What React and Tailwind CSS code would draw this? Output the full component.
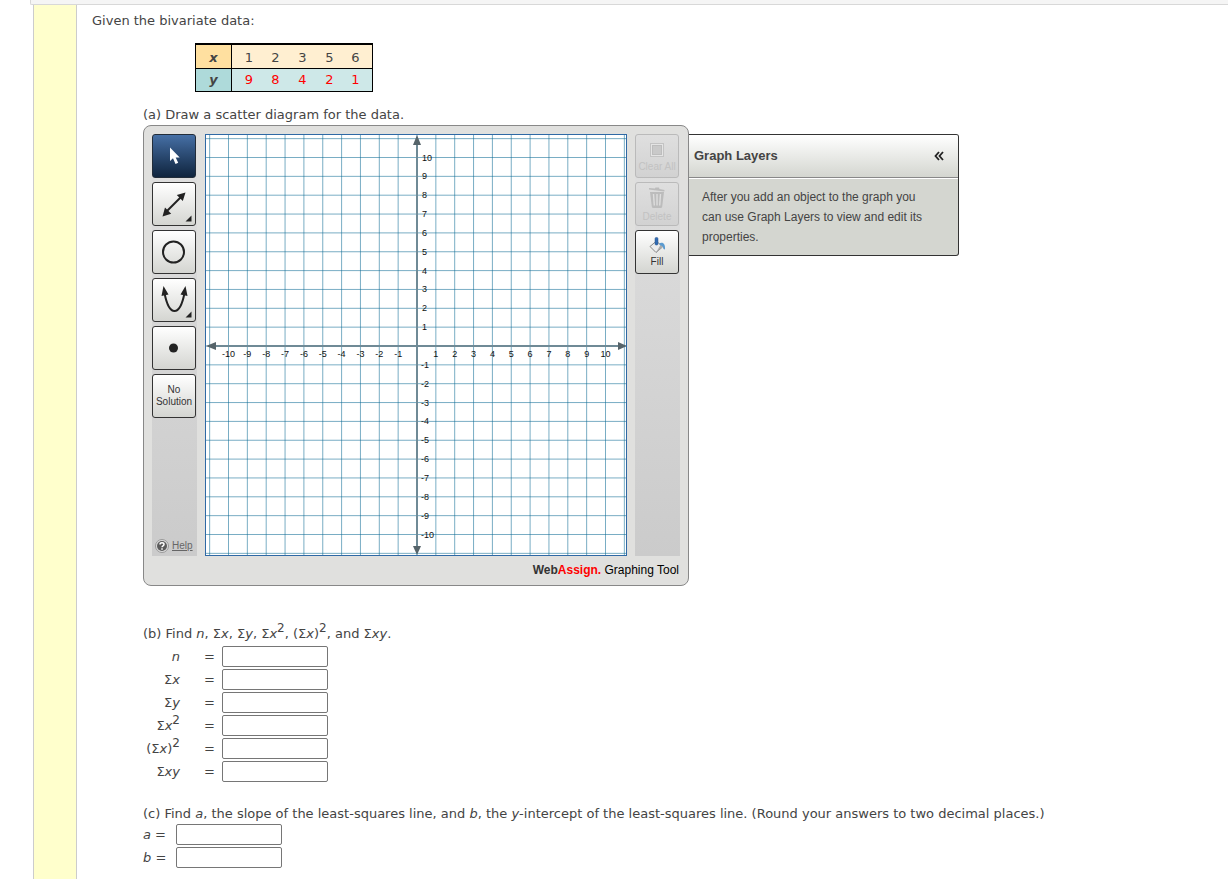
import React from "react";

const STEP = 18.85;
const MID = 212;
const LINES = Array.from({ length: 23 }, (_, i) => i - 11);
const TICKS = LINES.filter((n) => n !== 0 && Math.abs(n) <= 10);

const DATA = { x: [1, 2, 3, 5, 6], y: [9, 8, 4, 2, 1] };

const TOOL =
  "flex h-11 w-11 flex-col items-center justify-center rounded-[3px] border border-[#333] bg-linear-to-b from-white to-[#d4d5d1] text-[#333]";
const DISABLED =
  "flex h-11 w-11 flex-col items-center justify-end rounded-[3px] border border-[#bababa] bg-linear-to-b from-[#dfdfdf] to-[#d2d2d2] text-[#c2c2c2]";
const TOOL_TEXT = "font-['Liberation_Sans',sans-serif] text-[10px] leading-3";

function Sq({ children }) {
  return (
    <>
      {children}
      <sup className="text-[12px]">2</sup>
    </>
  );
}

function DataTable() {
  return (
    <table className="ml-[103px] mt-3 border-separate border-spacing-0 border border-t-2 border-black text-center leading-5">
      <tbody>
        <tr className="h-6 bg-[#ffefd1]">
          <th scope="row" className="w-9 border-r border-b border-black bg-[#ffe0a0] pt-[3px] italic">x</th>
          {DATA.x.map((v) => (
            <td key={v} className="w-[27px] border-b border-black pt-[3px] first-of-type:w-[30px] first-of-type:pl-1 last:w-[29px] last:pr-1">{v}</td>
          ))}
        </tr>
        <tr className="h-[22px] bg-[#cee8e8] text-[#f00]">
          <th scope="row" className="border-r border-black bg-[#aedada] italic text-[#444]">y</th>
          {DATA.y.map((v) => (
            <td key={v} className="first-of-type:pl-1 last:pr-1">{v}</td>
          ))}
        </tr>
      </tbody>
    </table>
  );
}

function Graph() {
  return (
    <svg width="422" height="422" viewBox="0 0 422 422" className="shrink-0 bg-white" role="img" aria-label="Coordinate grid">
      <g stroke="#0b6a93" strokeOpacity="0.55" strokeWidth="1">
        {LINES.map((n) => (
          <g key={n}>
            <line x1={MID + n * STEP} x2={MID + n * STEP} y1="0" y2="422" />
            <line y1={MID + n * STEP} y2={MID + n * STEP} x1="0" x2="422" />
          </g>
        ))}
      </g>
      <g stroke="#6f8a96" strokeWidth="2">
        <line x1="212" x2="212" y1="4" y2="418" />
        <line x1="4" x2="418" y1="212" y2="212" />
      </g>
      <g fill="#56646a">
        <path d="M212 1l4 10h-8z" />
        <path d="M212 421l4-9h-8z" />
        <path d="M1 212l10-4v8z" />
        <path d="M422 212l-9-4v8z" />
      </g>
      <g className="font-['Liberation_Sans',sans-serif] text-[9px]" fill="#111">
        {TICKS.map((n) => (
          <g key={n}>
            <text x={MID + n * STEP} y="223" textAnchor="middle">{n}</text>
            <text x={n < 0 ? 216 : 217} y={MID - n * STEP + 3}>{n}</text>
          </g>
        ))}
      </g>
      <rect x="0.5" y="0.5" width="421" height="421" fill="none" stroke="#2f69a5" />
    </svg>
  );
}

function LeftTools() {
  return (
    <div className="flex w-[45px] flex-col items-start gap-1 bg-linear-to-b from-[#e0e0e0] to-[#cbcbcb]">
      <button aria-label="Select" className="flex h-11 w-11 items-center justify-center rounded-[3px] border border-[#222d3a] bg-linear-to-b from-[#4670a6] to-[#10253f]">
        <svg width="42" height="42" viewBox="0 0 42 42">
          <path d="M17 12.500v13.500l3-2.700 2.500 5.700 2.700-1.200-2.500-5.300h4z" fill="#fff" />
        </svg>
      </button>
      <button aria-label="Line" className={TOOL}>
        <svg width="42" height="42" viewBox="0 0 42 42" fill="#222">
          <path d="M13 29L29 13" stroke="#222" strokeWidth="2" />
          <path d="M32.500 9.500l-2.700 8.500-6-6zM9.500 33.500l2.500-9 6.200 6.200z" />
          <path d="M38.500 32.500v6h-6z" />
        </svg>
      </button>
      <button aria-label="Circle" className={TOOL}>
        <svg width="42" height="42" viewBox="0 0 42 42">
          <circle cx="20.500" cy="21" r="10.500" fill="none" stroke="#222" strokeWidth="2" />
        </svg>
      </button>
      <button aria-label="Parabola" className={TOOL}>
        <svg width="42" height="42" viewBox="0 0 42 42">
          <path d="M11.500 14C14 27 18 32 21.500 32S29 27 31.500 14" fill="none" stroke="#222" strokeWidth="2" />
          <path d="M10.500 7l5 8.500-7 1.500zM32.500 7l-5 8.500 7 1.500zM38.500 32.500v6h-6z" fill="#222" />
        </svg>
      </button>
      <button aria-label="Point" className={TOOL}>
        <svg width="42" height="42" viewBox="0 0 42 42">
          <circle cx="20.500" cy="21" r="4.500" fill="#222" />
        </svg>
      </button>
      <button className={TOOL}>
        <span className={TOOL_TEXT}>No</span>
        <span className={TOOL_TEXT}>Solution</span>
      </button>
      <a href="#help" className="mt-auto flex items-center gap-[3px] pb-[3px] pl-[3px] font-['Liberation_Sans',sans-serif] text-[10px] leading-[14px] text-[#666] underline">
        <svg width="14" height="14" viewBox="0 0 14 14">
          <circle cx="7" cy="7" r="6.500" fill="#ddd" stroke="#999" />
          <circle cx="7" cy="7" r="5" fill="#5c5c5c" />
          <path d="M5 5.500C5 3.300 9 3.300 9 5.500 9 7 7 6.800 7 8.300M7 9.300v1.500" fill="none" stroke="#fff" strokeWidth="1.500" />
        </svg>
        Help
      </a>
    </div>
  );
}

function RightTools() {
  return (
    <div className="flex w-[45px] flex-col items-start gap-1 bg-linear-to-b from-[#e0e0e0] to-[#cbcbcb]">
      <button disabled className={DISABLED}>
        <svg width="14" height="14" viewBox="0 0 14 14">
          <rect x="0.500" y="0.500" width="13" height="13" fill="#e4e4e4" stroke="#c3c3c3" />
          <rect x="2.500" y="2.500" width="9" height="9" fill="#c9c9c9" stroke="#bdbdbd" />
        </svg>
        <span className={`${TOOL_TEXT} mt-1 mb-1 whitespace-nowrap`}>Clear All</span>
      </button>
      <button disabled className={DISABLED}>
        <svg width="18" height="21" viewBox="0 0 18 21" fill="#bcbcbc">
          <path d="M1 1l6 .5 .5-1h3.500l.500 1.500 5 1-.2 1.500L1 2.500zM2 5h14l-1.800 14.500q-.2 1.500-1.500 1.500h-7.400q-1.300 0-1.500-1.500z" />
          <path d="M5.500 7l.8 11.500M9 7v11.500M12.500 7l-.8 11.500" stroke="#dedede" strokeWidth="1.400" />
        </svg>
        <span className={`${TOOL_TEXT} mt-[3px] mb-[2px]`}>Delete</span>
      </button>
      <button className={TOOL}>
        <svg width="18" height="18" viewBox="0 0 18 18">
          <path d="M2 10.500L8.500 5l6 6-6.500 5.500z" fill="#ececec" stroke="#888" />
          <path d="M8 16.500l6.500-5.500-2-2z" fill="#aaa" />
          <path d="M11 7.500c4-2 6.500.5 6 6l-1.500-.5c-.500-2.500-1.500-3.500-3-3.500z" fill="#5b9bd0" />
          <rect x="7" y="1.500" width="3" height="7.500" rx="1.200" fill="#326bb2" stroke="#24508c" strokeWidth="0.500" />
        </svg>
        <span className={`${TOOL_TEXT} mt-[2px]`}>Fill</span>
      </button>
    </div>
  );
}

function GraphingTool() {
  return (
    <div className="ml-[51px] flex items-start">
      <div className="rounded-lg border border-[#888] bg-[#e0e0de] px-2 pt-2">
        <div className="flex gap-2">
          <LeftTools />
          <Graph />
          <RightTools />
        </div>
        <p className="pt-1 pr-px pb-[5px] text-right font-['Liberation_Sans',sans-serif] text-[12px] leading-5 text-black">
          <b className="text-[#333]">Web</b>
          <b className="text-[#f00]">Assign.</b> Graphing Tool
        </p>
      </div>
      <section className="mt-[9px] w-[270px] rounded-r-[3px] border border-l-0 border-[#333] bg-[#d4d6d0] font-['Liberation_Sans',sans-serif]">
        <header className="flex h-[43px] items-center justify-between rounded-tr-[2px] border-b border-[#888] bg-linear-to-b from-white to-[#d4d6d0] pr-[14px] pl-[5px]">
          <h2 className="text-[13px] leading-5 font-bold text-[#444]">Graph Layers</h2>
          <button aria-label="Collapse">
            <svg width="10" height="10" viewBox="0 0 10 10" fill="none" stroke="#222" strokeWidth="1.800">
              <path d="M5 1L1.500 5 5 9M9 1L5.500 5 9 9" />
            </svg>
          </button>
        </header>
        <p className="border-t border-white pt-2 pr-5 pb-2 pl-[13px] text-[12px] leading-5 text-[#444]">
          After you add an object to the graph you can use Graph Layers to view and edit its properties.
        </p>
      </section>
    </div>
  );
}

const SUMS = [
  ["n", <i>n</i>],
  ["sx", <>Σ<i>x</i></>],
  ["sy", <>Σ<i>y</i></>],
  ["sx2", <Sq>Σ<i>x</i></Sq>],
  ["sx-2", <Sq>(Σ<i>x</i>)</Sq>],
  ["sxy", <>Σ<i>xy</i></>],
];

const FIELD = "h-[21px] w-[106px] rounded-[2px] border border-[#767676] bg-white px-1 outline-none";

export default function App() {
  return (
    <div className="flex min-h-screen flex-col bg-white font-[Verdana,'DejaVu_Sans',sans-serif] text-[13px] leading-5 text-[#444]">
      <div className="ml-[30px] h-[5px] rounded-bl-[2px] border-b border-l border-[#d8d8d8] bg-[#f5f5f5]" />
      <div className="flex grow pl-[33px]">
        <div className="w-11 shrink-0 border-x border-[#ccc] bg-[#ffffcc]" />
        <main className="grow pt-[6px] pb-[11px] pl-[15px]">
          <p>Given the bivariate data:</p>
          <DataTable />
          <p className="mt-[13px] ml-[51px]">(a) Draw a scatter diagram for the data.</p>
          <GraphingTool />
          <div className="mt-[38px] ml-[51px]">
            <p>
              (b) Find <i>n</i>, Σ<i>x</i>, Σ<i>y</i>, <Sq>Σ<i>x</i></Sq>, <Sq>(Σ<i>x</i>)</Sq>, and Σ<i>xy</i>.
            </p>
            <div className="mt-[2px] flex flex-col gap-[2px]">
              {SUMS.map(([id, label]) => (
                <div key={id} className="flex h-[21px] items-center">
                  <label htmlFor={id} className="w-[37px] text-right whitespace-nowrap">{label}</label>
                  <span className="w-[42px] pl-[24px]">=</span>
                  <input id={id} type="text" className={FIELD} />
                </div>
              ))}
            </div>
          </div>
          <div className="mt-[22px] ml-[51px]">
            <p>
              (c) Find <i>a</i>, the slope of the least-squares line, and <i>b</i>, the <i>y</i>-intercept of the least-squares line. (Round your answers to two decimal places.)
            </p>
            <div className="flex flex-col gap-[2px]">
              {["a", "b"].map((v) => (
                <div key={v} className="flex h-[21px] items-center">
                  <label htmlFor={v} className="w-[33px]"><i>{v}</i> =</label>
                  <input id={v} type="text" className={FIELD} />
                </div>
              ))}
            </div>
          </div>
        </main>
      </div>
    </div>
  );
}
